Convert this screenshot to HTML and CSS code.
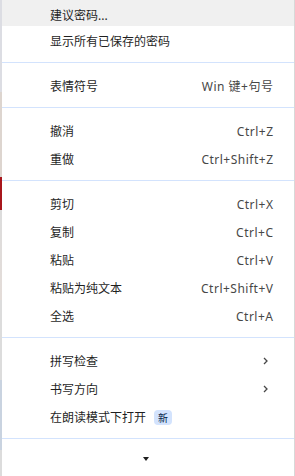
FILE: index.html
```html
<!DOCTYPE html>
<html lang="zh-CN">
<head>
    <meta charset="UTF-8">
    <meta name="viewport" content="width=device-width, initial-scale=1.0">
    <title>Context Menu</title>
    <link rel="stylesheet" href="styles.css">
</head>
<body>
    <div class="screen">
        <div class="edge-left"></div>

        <div class="menu">
            <div class="item item-first active"><span class="label">建议密码...</span></div>
            <div class="item"><span class="label">显示所有已保存的密码</span></div>
            <div class="sep"></div>

            <div class="item"><span class="label">表情符号</span><span class="shortcut">Win 键+句号</span></div>
            <div class="sep"></div>

            <div class="item"><span class="label">撤消</span><span class="shortcut">Ctrl+Z</span></div>
            <div class="item"><span class="label">重做</span><span class="shortcut">Ctrl+Shift+Z</span></div>
            <div class="sep"></div>

            <div class="item"><span class="label">剪切</span><span class="shortcut">Ctrl+X</span></div>
            <div class="item"><span class="label">复制</span><span class="shortcut">Ctrl+C</span></div>
            <div class="item"><span class="label">粘贴</span><span class="shortcut">Ctrl+V</span></div>
            <div class="item"><span class="label">粘贴为纯文本</span><span class="shortcut">Ctrl+Shift+V</span></div>
            <div class="item"><span class="label">全选</span><span class="shortcut">Ctrl+A</span></div>
            <div class="sep"></div>

            <div class="item">
                <span class="label">拼写检查</span>
                <svg class="chevron" width="5" height="8" viewBox="0 0 5 8"><path d="M1 1 L4 4 L1 7" fill="none" stroke="#474747" stroke-width="1.3"/></svg>
            </div>
            <div class="item">
                <span class="label">书写方向</span>
                <svg class="chevron" width="5" height="8" viewBox="0 0 5 8"><path d="M1 1 L4 4 L1 7" fill="none" stroke="#474747" stroke-width="1.3"/></svg>
            </div>
            <div class="item">
                <span class="label label-fit">在朗读模式下打开</span>
                <span class="badge">新</span>
            </div>
            <div class="sep"></div>

            <div class="more">
                <svg width="6" height="4" viewBox="0 0 6 4"><path d="M0 0 L6 0 L3 4 Z" fill="#1f1f1f"/></svg>
            </div>
        </div>

        <div class="edge-right"></div>
    </div>
</body>
</html>
```

FILE: styles.css
```css
:root {
    --text-color: #1f1f1f;
    --muted-color: #474747;
    --hover-color: #f0f0f0;
    --sep-color: #d3e3fd;
    --badge-bg: #d3e3fd;
    --badge-text: #041e49;
}

body, html {
    margin: 0;
    padding: 0;
    height: 100%;
    overflow: hidden;
    font-family: "Noto Sans", "Noto Sans CJK SC", sans-serif;
    font-size: 12px;
    color: var(--text-color);
}

.screen {
    display: flex;
    height: 476px;
}

.edge-left {
    width: 2px;
    background: linear-gradient(to bottom,
        #dcdde3 0, #dcdde3 92px,
        #ddd5cf 92px, #ddd5cf 177px,
        #a8161c 177px, #a8161c 210px,
        #dcdcdc 210px, #e4dcd8 300px,
        #dcdcdc 300px, #dcdcdc 380px,
        #c9d3e0 380px, #c9d3e0 450px,
        #dcdcdc 450px);
}

.edge-right {
    width: 1px;
    background: #d8d8d8;
}

.menu {
    flex: 1;
    background: #ffffff;
    display: flex;
    flex-direction: column;
}

.item {
    display: flex;
    align-items: center;
    height: 28px;
    padding: 2px 21px 0 48px;
    box-sizing: border-box;
    white-space: nowrap;
}

.item-first {
    height: 26px;
    padding-top: 3px;
}

.item.active {
    background-color: var(--hover-color);
}

.label {
    flex: 1;
}

.label-fit {
    flex: none;
}

.shortcut {
    color: var(--muted-color);
    letter-spacing: 0.5px;
    margin-right: -0.5px;
}

.chevron {
    margin-right: 5px;
}

.badge {
    margin-left: 8px;
    width: 18px;
    height: 15px;
    border-radius: 4px;
    background-color: var(--badge-bg);
    color: var(--badge-text);
    font-size: 10px;
    display: flex;
    align-items: center;
    justify-content: center;
}

.sep {
    height: 17px;
    display: flex;
    align-items: center;
}

.sep::after {
    content: "";
    display: block;
    width: 100%;
    height: 1px;
    background-color: var(--sep-color);
}

.more {
    display: flex;
    justify-content: center;
    padding-top: 10px;
    padding-right: 4px;
}
```
